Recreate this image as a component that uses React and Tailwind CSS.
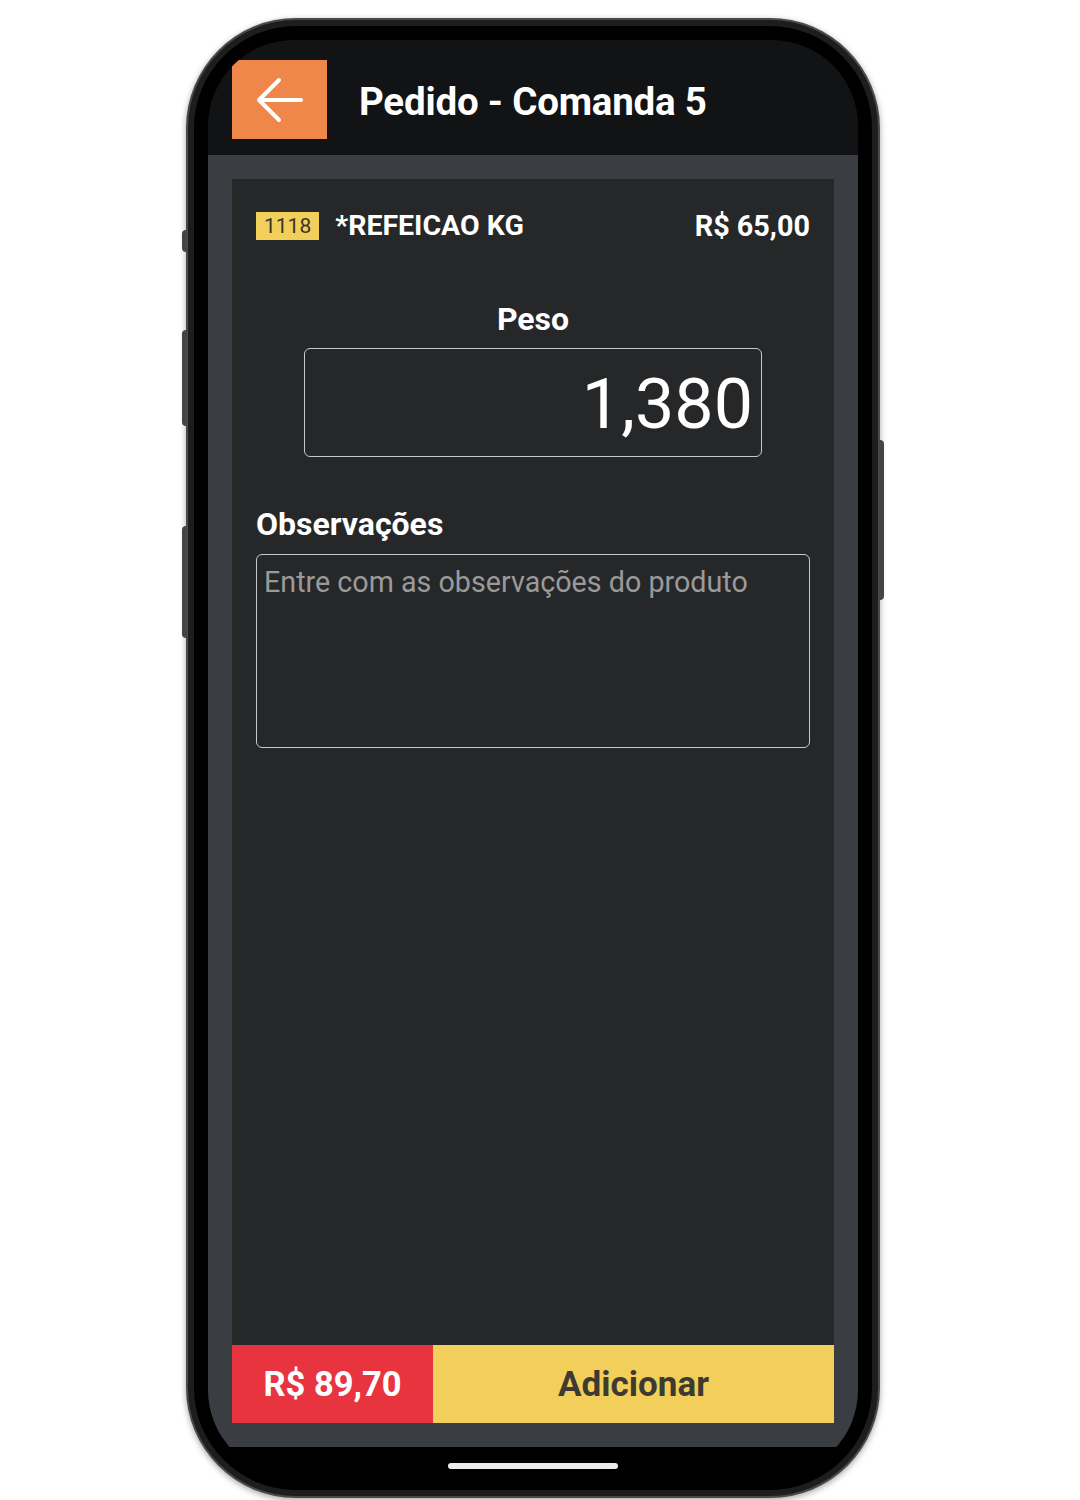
import React from 'react';

const font = { fontFamily: 'Roboto, "Liberation Sans", sans-serif' };

const BackArrow = () => (
  <svg width="48" height="48" viewBox="0 0 48 48" fill="none">
    <path d="M45 24H3M23 4L3 24l20 20" stroke="#fff" strokeWidth="4" strokeLinecap="round" strokeLinejoin="round" />
  </svg>
);

const Header = () => (
  <div className="flex items-center h-[115px] bg-[#121314] px-6 pt-[4px]">
    <button className="w-[95px] h-[79px] bg-[#f0874a] flex items-center justify-center">
      <BackArrow />
    </button>
    <h1 className="ml-8 mt-[5px] text-[38.5px] font-bold text-white leading-none tracking-[-0.2px]">
      Pedido - Comanda 5
    </h1>
  </div>
);

const ProductRow = () => (
  <div className="flex items-center justify-between">
    <div className="flex items-center">
      <span className="bg-[#f2cf5b] text-[#3b3526] text-[21px] leading-[28px] px-[8px] h-[28px]">1118</span>
      <span className="ml-4 text-white font-bold text-[28.5px] leading-none">*REFEICAO KG</span>
    </div>
    <span className="text-white font-bold text-[28.8px] leading-none">R$ 65,00</span>
  </div>
);

const PhoneScreen = () => (
  <div className="w-[650px] h-[1436px] rounded-[86px] overflow-hidden bg-black flex flex-col">
    <Header />
    <div className="flex-1 bg-[#3a3d41] p-6 flex">
      <div className="flex-1 bg-[#262729] flex flex-col">
        <div className="flex-1 px-6 pt-[33px]">
          <ProductRow />
          <div className="mt-[62px] flex flex-col items-center">
            <span className="text-white font-bold text-[32px] leading-none">Peso</span>
            <div className="mt-[13px] w-[458px] h-[109px] border-[1.5px] border-[#c8c8c8] rounded-[6px] flex items-center justify-end pr-[8px]">
              <span className="text-white text-[70px] leading-none pt-[4px]">1,380</span>
            </div>
          </div>
          <div className="mt-[51px]">
            <span className="text-white font-bold text-[32px] leading-none">Observações</span>
            <div className="mt-[12px] h-[194px] border-[1.5px] border-[#c8c8c8] rounded-[6px] px-[7px] pt-[13px]">
              <span className="text-[#9a9a9a] text-[28.7px] leading-none">Entre com as observações do produto</span>
            </div>
          </div>
        </div>
        <div className="h-[78px] flex">
          <div className="w-[201px] bg-[#e8343f] flex items-center justify-center">
            <span className="text-white font-bold text-[34.5px] leading-none">R$ 89,70</span>
          </div>
          <div className="flex-1 bg-[#f2cf5b] flex items-center justify-center">
            <span className="text-[#3d3a30] font-bold text-[35px] leading-none">Adicionar</span>
          </div>
        </div>
      </div>
    </div>
    <div className="h-[29px] bg-black flex justify-center pt-[16px]">
      <div className="w-[170px] h-[6px] rounded-full bg-[#ececec]" />
    </div>
  </div>
);

export default function App() {
  return (
    <div className="w-[1080px] h-[1500px] bg-white pl-[186px] pt-[18px]" style={font}>
      <div className="relative w-[694px] h-[1480px]">
        {/* side buttons */}
        <div className="absolute left-[-4px] top-[212px] w-[5px] h-[22px] rounded-l bg-[#444]" />
        <div className="absolute left-[-4px] top-[312px] w-[5px] h-[96px] rounded-l bg-[#444]" />
        <div className="absolute left-[-4px] top-[508px] w-[5px] h-[112px] rounded-l bg-[#444]" />
        <div className="absolute right-[-4px] top-[422px] w-[5px] h-[160px] rounded-r bg-[#444]" />
        <div className="w-full h-full rounded-[110px] bg-[#4a4a4a] p-[2px] shadow-[0_2px_6px_rgba(0,0,0,0.35)]">
          <div className="w-full h-full rounded-[108px] bg-[#1d1d1d] p-[6px]">
            <div className="w-full h-full rounded-[102px] bg-black p-[14px]">
              <PhoneScreen />
            </div>
          </div>
        </div>
      </div>
    </div>
  );
}
